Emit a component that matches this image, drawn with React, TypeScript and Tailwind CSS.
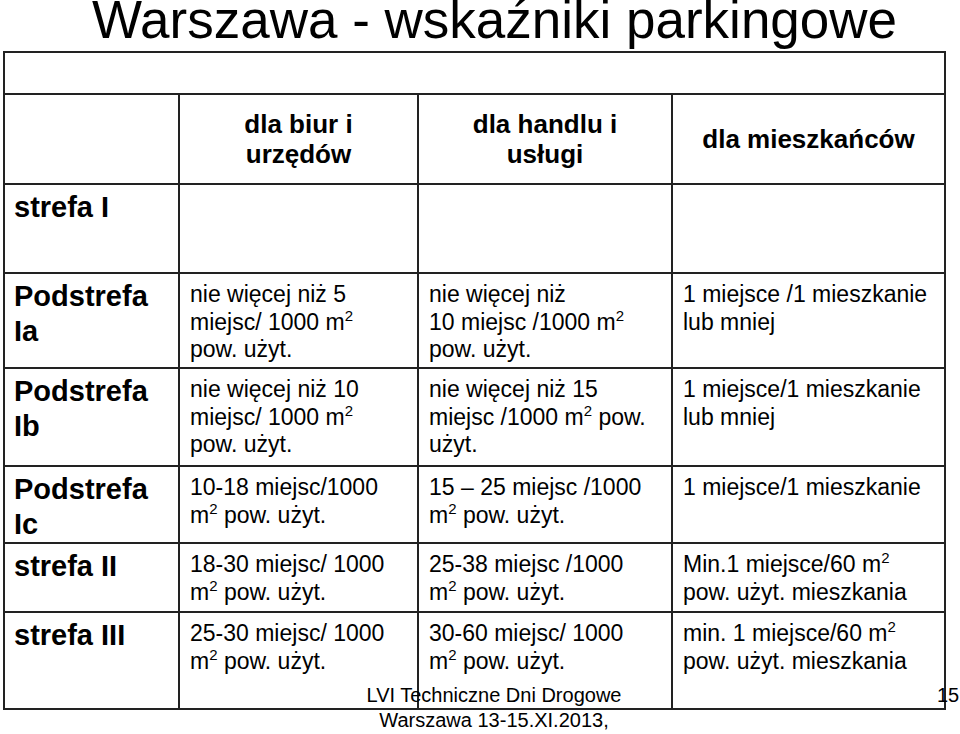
import React from 'react';

type Row = { label: React.ReactNode; cells: React.ReactNode[] };

const M2 = () => (
  <>
    m<sup className="text-[15px] top-[-9px]">2</sup>
  </>
);

const rows: Row[] = [
  {
    label: <>Podstrefa<br />Ia</>,
    cells: [
      <>nie więcej niż 5<br />miejsc/ 1000 <M2 /><br />pow. użyt.</>,
      <>nie więcej niż<br />10 miejsc /1000 <M2 /><br />pow. użyt.</>,
      <>1 miejsce /1 mieszkanie<br />lub mniej</>,
    ],
  },
  {
    label: <>Podstrefa<br />Ib</>,
    cells: [
      <>nie więcej niż 10<br />miejsc/ 1000 <M2 /><br />pow. użyt.</>,
      <>nie więcej niż 15<br />miejsc /1000 <M2 /> pow.<br />użyt.</>,
      <>1 miejsce/1 mieszkanie<br />lub mniej</>,
    ],
  },
  {
    label: <>Podstrefa<br />Ic</>,
    cells: [
      <>10-18 miejsc/1000<br /><M2 /> pow. użyt.</>,
      <>15 – 25 miejsc /1000<br /><M2 /> pow. użyt.</>,
      <>1 miejsce/1 mieszkanie</>,
    ],
  },
  {
    label: <>strefa II</>,
    cells: [
      <>18-30 miejsc/ 1000<br /><M2 /> pow. użyt.</>,
      <>25-38 miejsc /1000<br /><M2 /> pow. użyt.</>,
      <>Min.1 miejsce/60 <M2 /><br />pow. użyt. mieszkania</>,
    ],
  },
  {
    label: <>strefa III</>,
    cells: [
      <>25-30 miejsc/ 1000<br /><M2 /> pow. użyt.</>,
      <>30-60 miejsc/ 1000<br /><M2 /> pow. użyt.</>,
      <>min. 1 miejsce/60 <M2 /><br />pow. użyt. mieszkania</>,
    ],
  },
];

const labelCls = 'bg-white pl-[9px] pt-[5px] text-[29px] leading-[35px] font-bold whitespace-nowrap';
const cellCls = 'bg-white pl-[10px] pt-[7px] text-[23px] leading-[27.5px] whitespace-nowrap';
const headCls = 'bg-white flex items-center justify-center text-center text-[26px] leading-[30px] font-bold';

export default function App() {
  return (
    <div
      className="relative w-[960px] h-[734px] bg-white text-black overflow-hidden"
      style={{ fontFamily: '"Liberation Sans", Arial, sans-serif' }}
    >
      {/* Title */}
      <h1 className="h-[40px] pl-[92px] text-[53px] leading-[40px] font-normal whitespace-nowrap">
        Warszawa - wskaźniki parkingowe
      </h1>

      {/* Table */}
      <div className="ml-[3px] mt-[11px] w-[943px] grid grid-cols-[173px_237px_252px_271px] grid-rows-[40px_88px_87px_93px_96px_75px_67px_95px] gap-[2px] p-[2px] bg-[#222]">
        <div className="col-span-4 bg-white" />

        <div className="bg-white" />
        <div className={headCls}>dla biur i<br />urzędów</div>
        <div className={headCls}>dla handlu i<br />usługi</div>
        <div className={headCls}>dla mieszkańców</div>

        <div className={labelCls}>strefa I</div>
        <div className="bg-white" />
        <div className="bg-white" />
        <div className="bg-white" />

        {rows.map((r, i) => (
          <React.Fragment key={i}>
            <div className={labelCls}>{r.label}</div>
            {r.cells.map((c, j) => (
              <div key={j} className={cellCls}>
                {c}
              </div>
            ))}
          </React.Fragment>
        ))}
      </div>

      {/* Footer overlay */}
      <div className="absolute left-[344px] top-[683px] w-[300px] text-center text-[20px] leading-[25px] whitespace-nowrap">
        LVI Techniczne Dni Drogowe
        <br />
        Warszawa 13-15.XI.2013,
      </div>
      <div className="absolute left-[937px] top-[683px] text-[20px] leading-[25px]">15</div>
    </div>
  );
}
